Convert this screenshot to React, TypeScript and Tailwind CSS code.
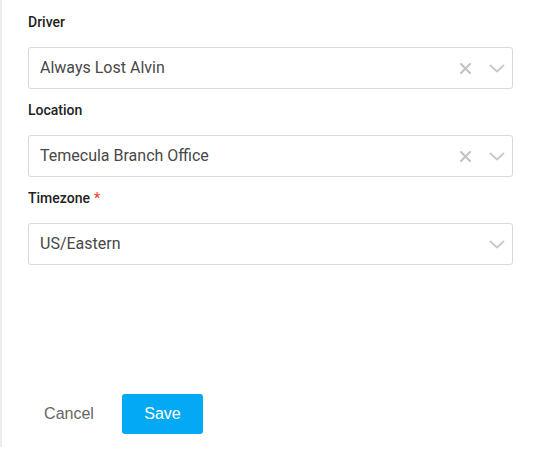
type FieldProps = {
  label: string;
  value: string;
  required?: boolean;
  clearable?: boolean;
};

function ClearIcon() {
  return (
    <svg width="11" height="11" viewBox="0 0 11 11" className="mr-[18px]">
      <path d="M1 1 L10 10 M10 1 L1 10" stroke="#c4c4c4" strokeWidth="2.2" strokeLinecap="round" />
    </svg>
  );
}

function Chevron() {
  return (
    <svg width="16" height="9" viewBox="0 0 16 9">
      <path d="M1.5 1.5 L8 7.5 L14.5 1.5" fill="none" stroke="#c8c8c8" strokeWidth="1.8" strokeLinecap="round" strokeLinejoin="round" />
    </svg>
  );
}

function SelectField({ label, value, required, clearable }: FieldProps) {
  return (
    <div>
      <div className="h-5 mb-[15px] text-[14px] leading-5 font-medium text-[#222]">
        {label}
        {required && <span className="text-[#f44336] ml-1">*</span>}
      </div>
      <div className="h-[42px] flex items-center border border-[#d9d9d9] rounded-[3px] pl-[11px] pr-[7px]">
        <span className="flex-1 text-[16px] text-[#484848]">{value}</span>
        {clearable && <ClearIcon />}
        <Chevron />
      </div>
    </div>
  );
}

export default function App() {
  return (
    <div className="w-[540px] h-[457px] bg-white font-['Roboto',sans-serif]">
      <div className="h-[447px] border-l-2 border-[#ececec] pt-3 pl-[26px] pr-[27px] flex flex-col">
        <div className="flex flex-col gap-[11px]">
          <SelectField label="Driver" value="Always Lost Alvin" clearable />
          <SelectField label="Location" value="Temecula Branch Office" clearable />
          <SelectField label="Timezone" value="US/Eastern" required />
        </div>
        <div className="mt-[129px] flex items-center gap-3 font-['Liberation_Sans',Arial,sans-serif] text-[16px]">
          <button className="h-10 w-[82px] text-[#666]">Cancel</button>
          <button className="h-10 w-[81px] rounded-[3px] bg-[#03a9f4] text-white font-medium">Save</button>
        </div>
      </div>
    </div>
  );
}
